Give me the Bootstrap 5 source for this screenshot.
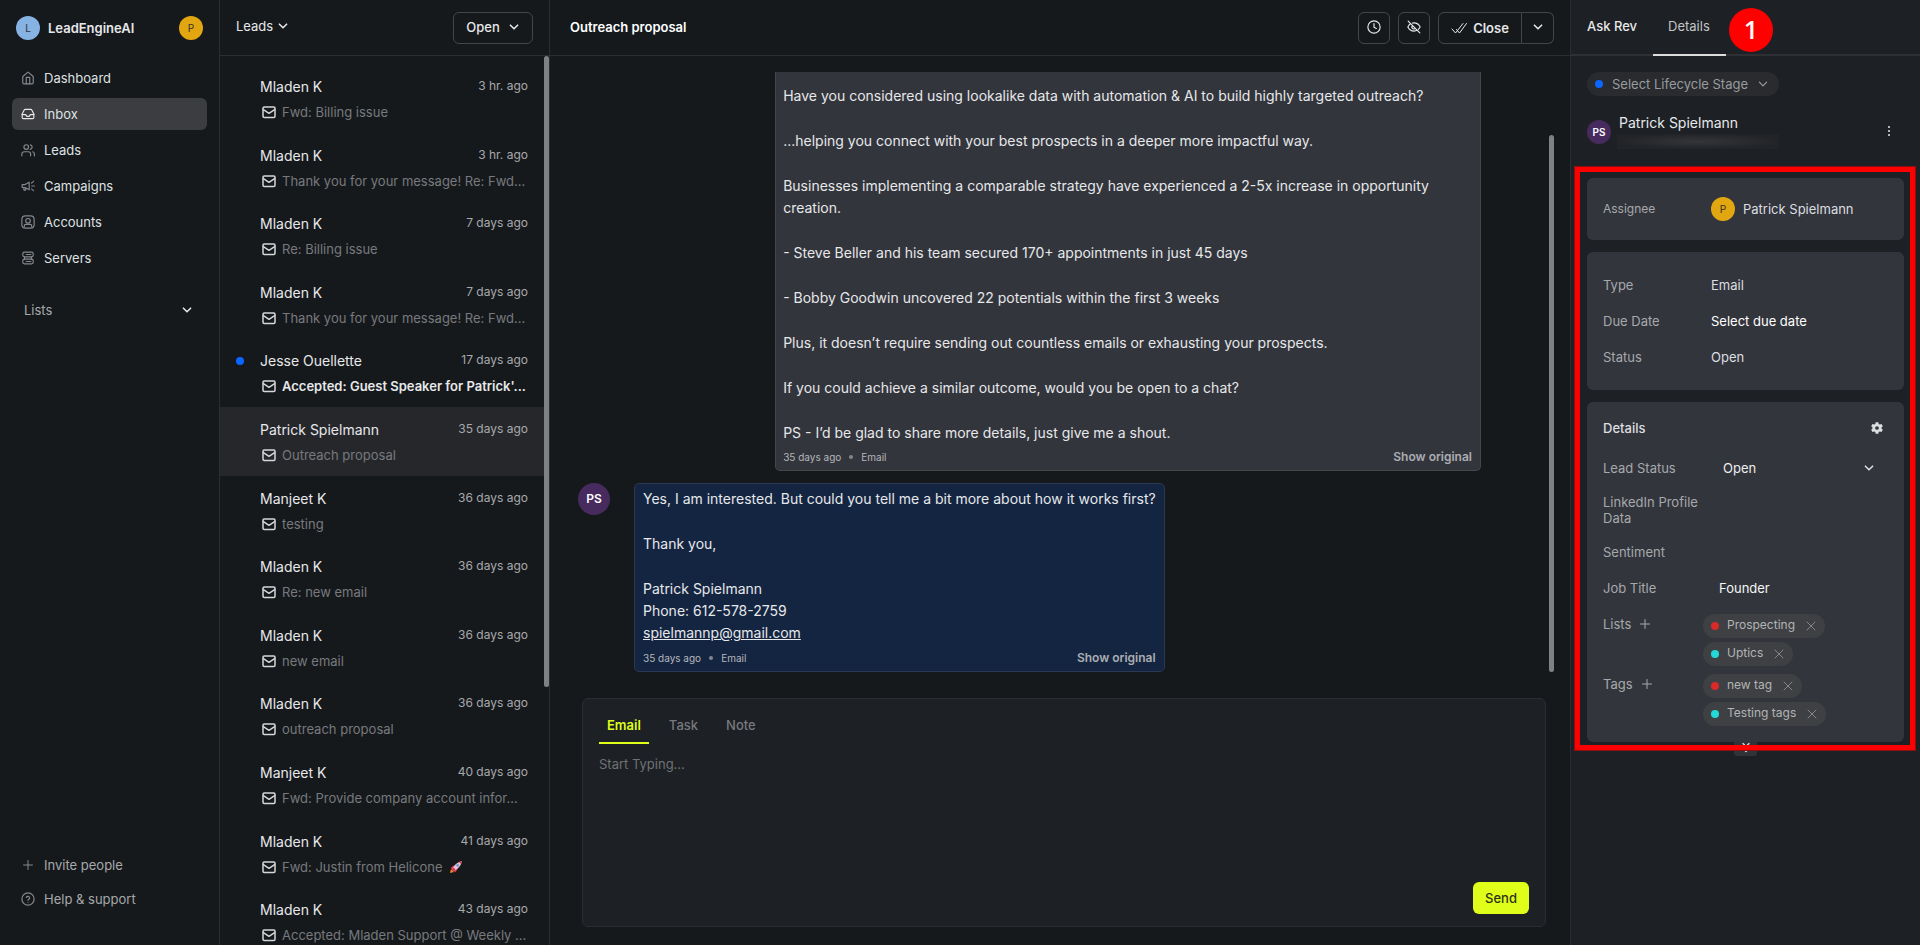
<!DOCTYPE html>
<html lang="en" data-bs-theme="dark">
<head>
<meta charset="utf-8">
<meta name="viewport" content="width=device-width, initial-scale=1">
<title>LeadEngineAI - Inbox</title>
<link href="https://cdn.jsdelivr.net/npm/bootstrap@5.3.0/dist/css/bootstrap.min.css" rel="stylesheet">
<style>
  :root {
    --bg: #16191c;
    --panel: #1d2024;
    --tile: #33353c;
    --line: #2b2e31;
    --txt: #e6e8ea;
    --soft: #a6a9ac;
    --dim: #76797d;
    --lime: #dfff1b;
  }
  body { font-family: Inter, "Liberation Sans", sans-serif; font-size: 13px; line-height: 20px; background: var(--bg); color: var(--txt); }
  a { color: inherit; text-decoration: none; }
  button { background: none; border: 0; padding: 0; color: inherit; font: inherit; }
  svg { display: block; flex: none; fill: none; stroke: currentColor; stroke-width: 2; stroke-linecap: round; stroke-linejoin: round; }
  .thin { stroke-width: 1; }
  .chev { stroke-width: 1.3; }
  .fs-name { font-size: 14px; line-height: 22px; }
  .fs-small { font-size: 12px; }
  .txt-soft { color: var(--soft); }
  .txt-dim { color: var(--dim); }

  .disc { width: 24px; height: 24px; border-radius: 50%; display: flex; align-items: center; justify-content: center; flex: none; font-size: 10px; color: #33302a; }
  .disc-blue { background: #86b2e4; }
  .disc-gold { background: #e2a610; }
  .disc-plum { background: #472b5e; color: #fff; font-weight: 600; }
  .disc-lg { width: 32px; height: 32px; font-size: 12px; }

  /* left navigation */
  .side { width: 220px; border-right: 1px solid var(--line); padding: 16px 12px 30px; }
  .side-brand { padding: 0 4px; height: 24px; }
  .side-brand .fw-semibold { padding-bottom: 1px; }
  .side-menu { margin-top: 22px; gap: 4px; }
  .side-item { height: 32px; padding: 0 9px 1px; gap: 9px; border-radius: 6px; color: #dfe1e3; }
  .side-item svg { color: #85888c; }
  .side-item.current { background: #3b3d40; }
  .side-item.current svg { color: #e6e8ea; }
  .side-item.txt-soft { color: var(--soft); }
  .side-group { margin-top: 20px; height: 32px; padding: 0 14px 1px 12px; }
  .side-foot { gap: 2px; }

  /* conversation list */
  .inbox { width: 330px; border-right: 1px solid var(--line); }
  .topbar { height: 56px; border-bottom: 1px solid var(--line); padding: 0 16px; }
  .topbar h1 { font-size: 13px; line-height: 20px; padding-bottom: 1px; }
  .ctl { height: 32px; border: 1px solid #424549; border-radius: 6px; display: flex; align-items: center; justify-content: center; font-weight: 500; padding-bottom: 1px; }
  .ctl-sq { width: 32px; }
  .ctl-open { width: 80px; gap: 8px; }
  .ctl-close { width: 84px; gap: 6px; font-weight: 600; padding-bottom: 0; }
  .threads { padding-top: 8px; overflow: hidden; }
  .threads ul { height: calc(100% + 11px); }
  .thread { flex: 1 1 0; min-height: 0; }
  .thread a { display: flex; height: 100%; padding: 12px 16px 0; }
  .thread.picked { background: #26272b; }
  .thread-mark { width: 24px; padding-top: 7px; flex: none; }
  .thread-sub { margin-top: 4px; padding-left: 2px; gap: 6px; color: var(--dim); }
  .thread-sub svg { color: #d5d7d9; }
  .unread .thread-sub { color: var(--txt); font-weight: 600; }
  .dot { width: 8px; height: 8px; border-radius: 50%; background: #0a66ff; flex: none; display: block; }
  .rail { width: 5px; flex: none; }
  .rail div { background: #808184; border-radius: 3px; }

  /* conversation */
  .talk { margin: 16px 16px 0 28px; }
  .talk-rows { margin-right: 68px; gap: 12px; }
  .bubble { border: 1px solid #45474d; border-radius: 5px; padding: 4px 8px 0 7px; background: var(--tile); font-size: 14px; line-height: 22px; }
  .bubble p { margin: 0 0 23px; }
  .bubble p:last-of-type { margin: 0; }
  .bubble a { text-decoration: underline; }
  .bubble-cut { border-top: 0; border-top-left-radius: 0; border-top-right-radius: 0; padding-top: 13px; }
  .bubble-in { background: #142542; border-color: #2a3852; padding-left: 8px; }
  .bubble-foot { height: 27px; font-size: 10px; color: #b4b6b9; }
  .bubble-cut .bubble-foot { height: 26px; }
  .bubble-foot i { width: 4px; height: 4px; border-radius: 50%; background: #85878b; margin: 0 8px; }
  .bubble-foot button { font-size: 12px; font-weight: 600; color: #abadb1; }
  .indent { margin-left: 56px; }
  .composer { margin: 26px 24px 18px 32px; border: 1px solid #2a2d31; border-radius: 6px; background: var(--panel); padding: 12px 16px; }
  .composer-tabs { gap: 12px; }
  .composer-tabs button { height: 33px; padding: 0 8px 3px; border-bottom: 2px solid transparent; color: var(--dim); font-weight: 500; }
  .composer-tabs .on { color: var(--lime); border-color: var(--lime); font-weight: 600; }
  .composer textarea { height: 127px; margin: 10px 0 1px; padding: 0; border: 0; outline: 0; resize: none; background: none; color: var(--txt); }
  .composer textarea::placeholder { color: #6f7276; opacity: 1; }
  .send { width: 56px; height: 32px; border-radius: 6px; background: var(--lime); color: #2e3215; font-weight: 500; padding-bottom: 1px; }

  /* details */
  .info { width: 350px; background: var(--panel); border-left: 1px solid var(--line); }
  .info-tabs { height: 56px; border-bottom: 2px solid #2e3034; }
  .info-tabs button { height: 56px; padding: 0 16px 2px; border-bottom: 2px solid transparent; }
  .info-tabs .on { padding: 0 16px 2px 15px; border-color: #dcdcdd; color: #c3c5c7; }
  .step { top: 8px; left: 158px; width: 44px; height: 44px; border-radius: 50%; background: #f00; color: #fff; font: 600 25px/42px "Open Sans", sans-serif; text-align: center; }
  .info-body { padding: 16px 16px 0; }
  .stage { height: 24px; padding: 0 10px 0 8px; gap: 9px; border-radius: 12px; background: #292b2f; color: #989b9e; }
  .person { margin-top: 16px; }
  .person-mask { width: 162px; height: 15px; background: radial-gradient(closest-side, #343538, #222427); margin-left: -2px; }
  .box { background: var(--tile); border-radius: 6px; padding: 15px 16px; margin-bottom: 12px; color: #dcdee0; }
  .box-who { padding: 19px 16px; margin-top: 29px; }
  .box-more { padding: 8px 16px 16px; margin: 0; }
  .line { min-height: 36px; display: flex; align-items: center; }
  .line dt, .line .lbl, .box-who dt { width: 108px; flex: none; font-weight: 400; color: var(--soft); line-height: 16px; }
  .line dt, .line dd, .line .lbl { padding-bottom: 1px; }
  .line dd { margin: 0; }
  .line select { width: 140px; margin-left: 12px; padding: 0; border: 0; outline: 0; appearance: none; background: none; color: #eceef0; }
  .line input { width: 150px; margin-left: 8px; padding: 0 0 1px; border: 0; outline: 0; background: none; color: #f4f5f6; }
  .line-tall { min-height: 48px; }
  .line-top { align-items: flex-start; }
  .line-top .lbl { width: 100px; height: 36px; gap: 8px; }
  .chips { padding-top: 8px; gap: 4px; }
  .chip { height: 24px; border-radius: 12px; background: #3e4043; padding: 0 8px; font-size: 12px; color: #b2b4b6; }
  .chip-name { margin: 0 10px 2px 8px; }
  .chip svg { color: #85888b; }
  .red { background: #d92a2a; }
  .cyan { background: #25d8d8; }
  .more { top: 100%; left: 147px; width: 23px; height: 14px; background: #303338; border-radius: 0 0 3px 3px; display: flex; justify-content: center; }
  .frame { inset: -11px -11px -8px -12px; border: 5px solid #f00; box-shadow: 0 0 0 1px #8a1013; pointer-events: none; }
</style>
</head>
<body>
<svg width="0" height="0" class="position-absolute" aria-hidden="true">
  <defs>
    <symbol id="down" viewBox="0 0 10 10"><path d="M2 3.500l3 3 3-3"/></symbol>
    <symbol id="mail" viewBox="0 0 14 14"><rect x="1" y="2" width="12" height="10.400" rx="1.200"/><path d="M1.400 4.600L7 8.300l5.600-3.700"/></symbol>
    <symbol id="cross" viewBox="0 0 12 12"><path d="M2 2l8 8M10 2l-8 8"/></symbol>
    <symbol id="plus" viewBox="0 0 12 12"><path d="M6 1.500v9M1.500 6h9"/></symbol>
  </defs>
</svg>
<div class="d-flex vh-100 overflow-hidden">

  <nav class="side d-flex flex-column flex-shrink-0" aria-label="Main">
    <div class="side-brand d-flex align-items-center gap-2">
      <span class="disc disc-blue">L</span>
      <span class="fw-semibold flex-grow-1">LeadEngineAI</span>
      <span class="disc disc-gold">P</span>
    </div>
    <div class="side-menu d-flex flex-column">
      <a href="#" class="side-item d-flex align-items-center"><svg width="14" height="14" viewBox="0 0 24 24"><path d="M3 9.500L12 2l9 7.500V20a2 2 0 0 1-2 2H5a2 2 0 0 1-2-2z"/><path d="M9 22V11h6v11"/></svg>Dashboard</a>
      <a href="#" class="side-item current d-flex align-items-center"><svg width="14" height="14" viewBox="0 0 24 24"><path d="M22 13h-6l-2 3h-4l-2-3H2"/><path d="M5.500 5.100L2 12v6a2 2 0 0 0 2 2h16a2 2 0 0 0 2-2v-6l-3.500-6.900A2 2 0 0 0 16.800 4H7.200a2 2 0 0 0-1.700 1.100z"/></svg>Inbox</a>
      <a href="#" class="side-item d-flex align-items-center"><svg width="14" height="14" viewBox="0 0 24 24"><path d="M16.500 22v-3a4 4 0 0 0-4-4h-7a4 4 0 0 0-4 4v3"/><circle cx="9" cy="7" r="4"/><path d="M23 22v-3a4 4 0 0 0-3-3.900M16 3.100a4 4 0 0 1 0 7.800"/></svg>Leads</a>
      <a href="#" class="side-item d-flex align-items-center"><svg width="14" height="14" viewBox="0 0 24 24"><path d="M2 9.500h5l7-4v13l-7-4H2zM5 15v4h3v-4M18.500 12H23M18 7l3.500-3M18 17l3.500 3"/></svg>Campaigns</a>
      <a href="#" class="side-item d-flex align-items-center"><svg width="14" height="14" viewBox="0 0 24 24"><rect x="1.500" y="1.500" width="21" height="21" rx="6"/><circle cx="12" cy="10" r="4"/><path d="M5.500 21v-2a3 3 0 0 1 3-3h7a3 3 0 0 1 3 3v2"/></svg>Accounts</a>
      <a href="#" class="side-item d-flex align-items-center"><svg width="14" height="14" viewBox="0 0 24 24"><rect x="3" y="2" width="18" height="8" rx="3"/><rect x="3" y="14" width="18" height="8" rx="3"/><path d="M6 10v4M18 10v4M9 6h8M9 18h8"/></svg>Servers</a>
    </div>
    <button type="button" class="side-group d-flex align-items-center justify-content-between">
      <span class="txt-soft">Lists</span>
      <svg width="12" height="12" class="chev"><use href="#down"/></svg>
    </button>
    <div class="side-foot d-flex flex-column mt-auto">
      <a href="#" class="side-item d-flex align-items-center txt-soft"><svg width="14" height="14" viewBox="0 0 14 14" class="thin"><path d="M7 2.500v9M2.500 7h9"/></svg>Invite people</a>
      <a href="#" class="side-item d-flex align-items-center txt-soft"><svg width="14" height="14" viewBox="0 0 24 24"><circle cx="12" cy="12" r="10.500"/><path d="M9.200 9.300a2.900 2.900 0 0 1 5.600.9c0 2-2.800 2.500-2.800 4M12 17.500v.1"/></svg>Help &amp; support</a>
    </div>
  </nav>

  <section class="inbox d-flex flex-column flex-shrink-0" aria-label="Conversations">
    <header class="topbar d-flex align-items-center justify-content-between flex-shrink-0">
      <button type="button" class="d-flex align-items-center pb-1">Leads<svg width="12" height="12" class="chev ms-1"><use href="#down"/></svg></button>
      <button type="button" class="ctl ctl-open">Open<svg width="12" height="12" class="chev"><use href="#down"/></svg></button>
    </header>
    <div class="d-flex flex-grow-1 overflow-hidden">
      <div class="threads flex-grow-1">
        <ul class="list-unstyled d-flex flex-column mb-0" id="threads"></ul>
      </div>
      <div class="rail"><div style="height:71%"></div></div>
    </div>
  </section>

  <main class="d-flex flex-column flex-grow-1 overflow-hidden">
    <header class="topbar d-flex align-items-center gap-2 flex-shrink-0">
      <h1 class="fw-semibold flex-grow-1 mb-0 ms-1">Outreach proposal</h1>
      <button type="button" class="ctl ctl-sq" aria-label="Snooze"><svg width="14" height="14" viewBox="0 0 24 24"><circle cx="12" cy="12" r="10.500"/><path d="M12 6v6.500l4 2"/></svg></button>
      <button type="button" class="ctl ctl-sq" aria-label="Hide"><svg width="14" height="14" viewBox="0 0 24 24"><path d="M9.500 5.300A10 10 0 0 1 12 5c7 0 10.500 7 10.500 7a17 17 0 0 1-3 4M6 6.500C3 8.500 1.500 12 1.500 12S5 19 12 19a10 10 0 0 0 5.500-1.700M9.500 9.500a3.500 3.500 0 0 0 5 5M2 2l20 20"/></svg></button>
      <div class="d-flex">
        <button type="button" class="ctl ctl-close rounded-end-0"><svg width="16" height="14" viewBox="0 0 16 14" class="thin"><path d="M1 8l3.500 4L12 2.500M5.500 8.500L8.500 12 15.500 2.500"/></svg>Close</button>
        <button type="button" class="ctl ctl-sq rounded-start-0 border-start-0" aria-label="More"><svg width="12" height="12" class="chev"><use href="#down"/></svg></button>
      </div>
    </header>

    <div class="talk d-flex flex-grow-1 overflow-hidden">
      <div class="talk-rows d-flex flex-column flex-grow-1">
        <div class="indent d-flex justify-content-end">
          <article class="bubble bubble-cut col-10">
            <p>Have you considered using lookalike data with automation &amp; AI to build highly targeted outreach?</p>
            <p>...helping you connect with your best prospects in a deeper more impactful way.</p>
            <p>Businesses implementing a comparable strategy have experienced a 2-5x increase in opportunity creation.</p>
            <p>- Steve Beller and his team secured 170+ appointments in just 45 days</p>
            <p>- Bobby Goodwin uncovered 22 potentials within the first 3 weeks</p>
            <p>Plus, it doesn’t require sending out countless emails or exhausting your prospects.</p>
            <p>If you could achieve a similar outcome, would you be open to a chat?</p>
            <p>PS - I’d be glad to share more details, just give me a shout.</p>
            <div class="bubble-foot d-flex align-items-center">35 days ago<i></i>Email<button type="button" class="ms-auto">Show original</button></div>
          </article>
        </div>
        <div class="d-flex align-items-start gap-4">
          <span class="disc disc-plum disc-lg">PS</span>
          <article class="bubble bubble-in">
            <p>Yes, I am interested. But could you tell me a bit more about how it works first?</p>
            <p>Thank you,</p>
            <p>Patrick Spielmann<br>Phone: 612-578-2759<br><a href="mailto:spielmannp@gmail.com">spielmannp@gmail.com</a></p>
            <div class="bubble-foot d-flex align-items-center">35 days ago<i></i>Email<button type="button" class="ms-auto">Show original</button></div>
          </article>
        </div>
      </div>
      <div class="rail d-flex flex-column justify-content-end"><div style="height:89.5%"></div></div>
    </div>

    <form class="composer d-flex flex-column flex-shrink-0">
      <div class="composer-tabs d-flex">
        <button type="button" class="on">Email</button>
        <button type="button">Task</button>
        <button type="button">Note</button>
      </div>
      <textarea aria-label="Message" placeholder="Start Typing..."></textarea>
      <button type="button" class="send align-self-end">Send</button>
    </form>
  </main>

  <aside class="info flex-shrink-0" aria-label="Details">
    <div class="info-tabs d-flex position-relative">
      <button type="button" class="fw-medium">Ask Rev</button>
      <button type="button" class="on">Details</button>
      <span class="step position-absolute">1</span>
    </div>
    <div class="info-body">
      <button type="button" class="stage d-flex align-items-center"><span class="dot"></span>Select Lifecycle Stage<svg width="12" height="12" class="thin"><use href="#down"/></svg></button>
      <div class="person d-flex gap-2">
        <span class="disc disc-plum mt-2">PS</span>
        <div class="flex-grow-1">
          <div class="fs-name">Patrick Spielmann</div>
          <div class="person-mask"></div>
        </div>
        <button type="button" aria-label="Menu" class="align-self-center me-2"><svg width="14" height="14" viewBox="0 0 14 14"><path d="M7 3v0M7 7v0M7 11v0"/></svg></button>
      </div>

      <div class="position-relative">
        <dl class="box box-who d-flex align-items-center">
          <dt class="fs-small">Assignee</dt>
          <dd class="d-flex align-items-center gap-2 mb-0"><span class="disc disc-gold">P</span>Patrick Spielmann</dd>
        </dl>
        <dl class="box">
          <div class="line"><dt>Type</dt><dd>Email</dd></div>
          <div class="line"><dt>Due Date</dt><dd><button type="button" class="text-white">Select due date</button></dd></div>
          <div class="line"><dt>Status</dt><dd>Open</dd></div>
        </dl>
        <div class="box box-more position-relative">
          <div class="line justify-content-between mb-1">
            <span class="fw-medium">Details</span>
            <button type="button" aria-label="Settings" class="me-1"><svg width="14" height="14" viewBox="0 0 24 24" style="fill:currentColor;stroke:none"><path fill-rule="evenodd" d="M9.700 2h4.600l.6 3 1.900 1.100 2.900-1L22 9.100l-2.300 2v1.800l2.300 2-2.300 4-2.900-1-1.900 1.100-.6 3H9.700l-.6-3-1.900-1.100-2.900 1-2.300-4 2.300-2v-1.800L2 9.100l2.300-4 2.900 1L9.100 5zM12 8.800a3.200 3.200 0 1 0 0 6.400 3.200 3.200 0 0 0 0-6.400z"/></svg></button>
          </div>
          <div class="line">
            <label class="lbl" for="status">Lead Status</label>
            <select id="status"><option>Open</option><option>Closed</option></select>
            <svg width="12" height="12" class="chev flex-shrink-0"><use href="#down"/></svg>
          </div>
          <div class="line line-tall"><span class="lbl">LinkedIn Profile Data</span></div>
          <div class="line"><span class="lbl">Sentiment</span></div>
          <div class="line"><label class="lbl" for="job">Job Title</label><input id="job" type="text" value="Founder"></div>
          <div class="line line-top">
            <div class="lbl d-flex align-items-center">Lists<button type="button" aria-label="Add list"><svg width="12" height="12" class="thin"><use href="#plus"/></svg></button></div>
            <div class="chips d-flex flex-column align-items-start">
              <span class="chip d-flex align-items-center"><i class="dot red"></i><span class="chip-name">Prospecting</span><button type="button" aria-label="Remove"><svg width="12" height="12" class="thin"><use href="#cross"/></svg></button></span>
              <span class="chip d-flex align-items-center"><i class="dot cyan"></i><span class="chip-name">Uptics</span><button type="button" aria-label="Remove"><svg width="12" height="12" class="thin"><use href="#cross"/></svg></button></span>
            </div>
          </div>
          <div class="line line-top">
            <div class="lbl d-flex align-items-center">Tags<button type="button" aria-label="Add tag"><svg width="12" height="12" class="thin"><use href="#plus"/></svg></button></div>
            <div class="chips d-flex flex-column align-items-start">
              <span class="chip d-flex align-items-center"><i class="dot red"></i><span class="chip-name">new tag</span><button type="button" aria-label="Remove"><svg width="12" height="12" class="thin"><use href="#cross"/></svg></button></span>
              <span class="chip d-flex align-items-center"><i class="dot cyan"></i><span class="chip-name">Testing tags</span><button type="button" aria-label="Remove"><svg width="12" height="12" class="thin"><use href="#cross"/></svg></button></span>
            </div>
          </div>
          <button type="button" class="more position-absolute" aria-label="Show more"><svg width="10" height="12" viewBox="0 0 10 12" class="chev"><path d="M2 1.500l3 3 3-3M2 6.500l3 3 3-3"/></svg></button>
        </div>
        <div class="frame position-absolute"></div>
      </div>
    </div>
  </aside>
</div>

<script>
  const rocket = '<svg width="14" height="14" viewBox="0 0 14 14" style="stroke:none"><path fill="#f58a1f" d="M1 13l1-4 3 3z"/><path fill="#dd2e44" d="M1.500 8l3-2.500 2 .5-3 3.500zM6 12.500l2.500-3-.5-2L4.500 10.500z"/><path fill="#e8c3d6" d="M3 9.500C5 5 8.500 1.800 12.800 1.200 12.300 5.500 9 9 4.500 11z"/><path fill="#dd2e44" d="M10 1.900l2.800-.7-.7 2.800zM3 9.500l1.500-2 2 2-2 1.500z"/><circle cx="8.600" cy="5.400" r="1.300" fill="#5b9bd5"/></svg>';
  const threads = [
    ["Mladen K", "3 hr. ago", "Fwd: Billing issue"],
    ["Mladen K", "3 hr. ago", "Thank you for your message! Re: Fwd..."],
    ["Mladen K", "7 days ago", "Re: Billing issue"],
    ["Mladen K", "7 days ago", "Thank you for your message! Re: Fwd..."],
    ["Jesse Ouellette", "17 days ago", "Accepted: Guest Speaker for Patrick'...", "unread"],
    ["Patrick Spielmann", "35 days ago", "Outreach proposal", "picked"],
    ["Manjeet K", "36 days ago", "testing"],
    ["Mladen K", "36 days ago", "Re: new email"],
    ["Mladen K", "36 days ago", "new email"],
    ["Mladen K", "36 days ago", "outreach proposal"],
    ["Manjeet K", "40 days ago", "Fwd: Provide company account infor..."],
    ["Mladen K", "41 days ago", "Fwd: Justin from Helicone " + rocket],
    ["Mladen K", "43 days ago", "Accepted: Mladen Support @ Weekly ..."]
  ];
  document.getElementById("threads").innerHTML = threads.map(([who, when, subject, state = ""]) => `
    <li class="thread ${state}"><a href="#">
      <span class="thread-mark">${state === "unread" ? '<span class="dot"></span>' : ""}</span>
      <span class="flex-grow-1">
        <span class="d-flex justify-content-between"><span class="fs-name">${who}</span><span class="fs-small txt-soft">${when}</span></span>
        <span class="thread-sub d-flex align-items-center text-nowrap"><svg width="14" height="14" style="stroke-width:1.500"><use href="#mail"/></svg>${subject}</span>
      </span>
    </a></li>`).join("");
</script>
<script src="https://cdn.jsdelivr.net/npm/bootstrap@5.3.0/dist/js/bootstrap.bundle.min.js"></script>
</body>
</html>
